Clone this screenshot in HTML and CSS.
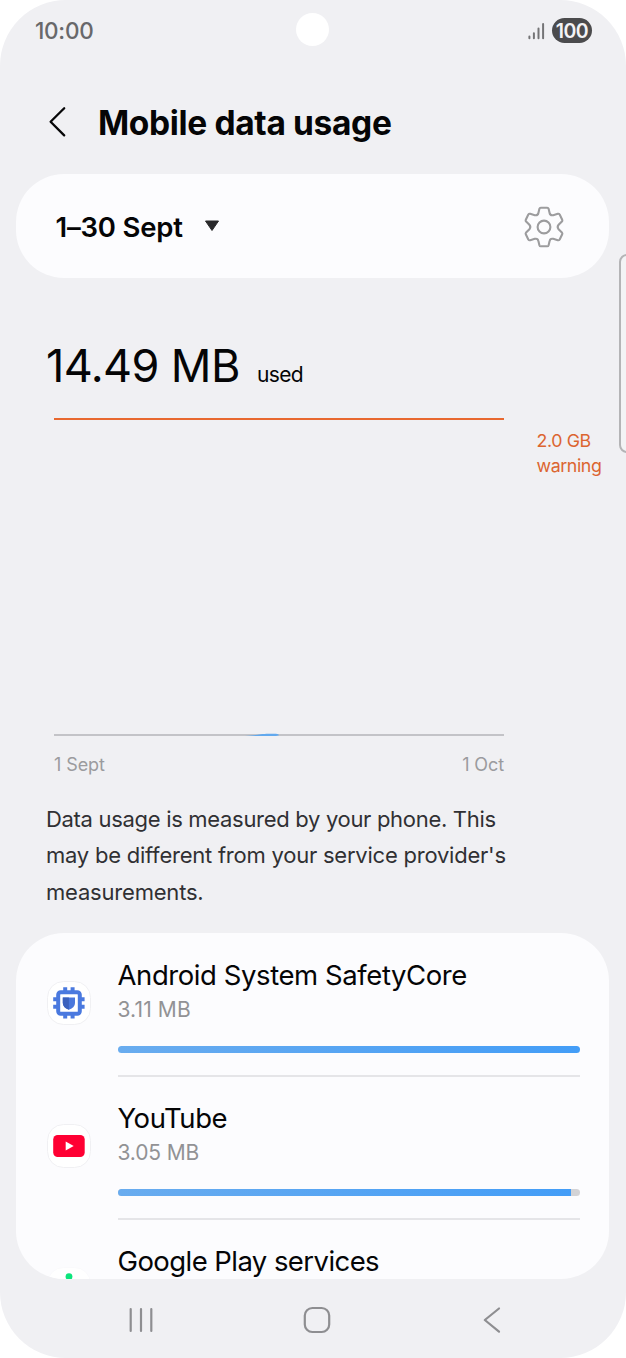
FILE: index.html
```html
<!DOCTYPE html>
<html lang="en-GB">
<head>
<meta charset="utf-8">
<title>Mobile data usage</title>
<link rel="stylesheet" href="styles.css">
</head>
<body>
<div class="screen">
  <header class="status">
    <span class="clock">10:00</span>
    <span class="camera"></span>
    <div class="status-right">
      <svg class="signal" width="18" height="18" viewBox="0 0 18 18"><path d="M2.4 14.6v1.6M6.9 11.2v5M11.5 6.6v9.6M16.1 2v14.2"/></svg>
      <span class="battery">100</span>
    </div>
  </header>
  <div class="titlebar">
    <svg class="back" width="20" height="34" viewBox="0 0 20 34"><path d="M17.2 2.2 3.6 15.8 17.2 29.4"/></svg>
    <h1 class="title">Mobile data usage</h1>
  </div>
  <section class="card period">
    <span class="period-label">1–30 Sept</span>
    <svg class="caret" width="16" height="12" viewBox="0 0 16 12"><path d="M1.5 1h13L8 10.5z"/></svg>
    <svg class="gear" width="42" height="42" viewBox="-21 -21 42 42"><path d="M-3.2-19.3H3.2Q4.3-19.3 4.6-18.2L5.6-14Q6.2-11.2 9.2-11.8L13.8-13.2Q15-13.5 15.7-12.5L18.2-7.3Q18.7-6.2 17.9-5.4L14.6-2.2Q12.7 0 14.6 2.2L17.9 5.4Q18.7 6.2 18.2 7.3L15.7 12.5Q15 13.5 13.8 13.2L9.2 11.8Q6.2 11.2 5.6 14L4.6 18.2Q4.3 19.3 3.2 19.3H-3.2Q-4.3 19.3-4.6 18.2L-5.6 14Q-6.2 11.2-9.2 11.8L-13.8 13.2Q-15 13.5-15.7 12.5L-18.2 7.3Q-18.7 6.2-17.9 5.4L-14.6 2.2Q-12.7 0-14.6-2.2L-17.9-5.4Q-18.7-6.2-18.2-7.3L-15.7-12.5Q-15-13.5-13.8-13.2L-9.2-11.8Q-6.2-11.2-5.6-14L-4.6-18.2Q-4.3-19.3-3.2-19.3Z"/><circle r="6.4"/></svg>
  </section>
  <div class="total"><span class="amount">14.49 MB</span><span class="used">used</span></div>
  <section class="chart">
    <div class="plot">
      <svg class="trend" width="36" height="4" viewBox="0 0 36 4"><path d="M0 3 C12 2.6 14 .8 24 .8H31Q34 1 34 2.2L31 3Z"/></svg>
    </div>
    <p class="warning">2.0 GB<br>warning</p>
  </section>
  <div class="axis"><span class="axis-start">1 Sept</span><span class="axis-end">1 Oct</span></div>
  <p class="note"><span class="l1">Data usage is measured by your phone. This</span><br><span class="l2">may be different from your service provider's</span><br><span class="l3">measurements.</span></p>
  <section class="card apps">
    <article class="app">
      <svg class="icon" width="46" height="46" viewBox="0 0 46 46"><rect class="tile" x="1.5" y="1.5" width="43" height="43" rx="16"/><path class="pins" d="M19.2 7.2V38.6M26.6 7.2V38.6M7.2 19.3H38.6M7.2 26.7H38.6"/><rect class="chip" x="12.2" y="12.2" width="21.6" height="21.6" rx="2.5"/><path class="shield" d="M16.8 17.5H29V23Q29 27.5 22.9 29.7Q16.8 27.5 16.8 23Z"/><path class="shield-half" d="M16.8 17.5H22.9V29.7Q16.8 27.5 16.8 23Z"/></svg>
      <div class="info">
        <h2 class="name n1">Android System SafetyCore</h2>
        <p class="size s1">3.11 MB</p>
        <div class="bar"><div class="fill" style="width:100%"></div></div>
      </div>
    </article>
    <article class="app">
      <svg class="icon" width="46" height="46" viewBox="0 0 46 46"><rect class="tile" x="1.5" y="1.5" width="43" height="43" rx="16"/><rect class="tube" x="7.2" y="12" width="31.5" height="22" rx="4.5"/><path class="play" d="M19.7 18.6v9L27.7 23.1z"/></svg>
      <div class="info">
        <h2 class="name n2">YouTube</h2>
        <p class="size s2">3.05 MB</p>
        <div class="bar"><div class="fill" style="width:98.1%"></div></div>
      </div>
    </article>
    <article class="app">
      <svg class="icon" width="46" height="46" viewBox="0 0 46 46"><rect class="tile tile-plain" x="1.5" y="1.5" width="43" height="43" rx="16"/><circle class="dot" cx="23" cy="10.6" r="3.4"/></svg>
      <div class="info">
        <h2 class="name n3">Google Play services</h2>
      </div>
    </article>
  </section>
  <nav class="nav">
    <svg width="30" height="30" viewBox="0 0 30 30"><path d="M4.7 4v22M15 4v22M25.3 4v22"/></svg>
    <svg width="30" height="30" viewBox="0 0 30 30"><rect x="2.8" y="3" width="24.4" height="24" rx="7.5"/></svg>
    <svg width="30" height="30" viewBox="0 0 30 30"><path d="M22 3.5 7.8 15 22 26.7"/></svg>
  </nav>
  <div class="edge-handle"></div>
</div>
</body>
</html>
```
FILE: styles.css
```css
* { box-sizing: border-box; margin: 0; padding: 0; }
body { background: #fff; font-family: Inter, "Liberation Sans", sans-serif; color: #050506; }
svg { display: block; flex: none; }
span, h1, h2, p { white-space: nowrap; }
.screen { position: relative; width: 626px; height: 1358px; overflow: hidden; background: #f0f0f3; border-radius: 66px; display: flex; flex-direction: column; }

.status { height: 61px; padding: 0 34px 0 35px; display: grid; grid-template-columns: 1fr 33px 1fr; align-items: center; }
.clock { font-size: 22.5px; font-weight: 500; letter-spacing: -.25px; color: #68686a; }
.camera { width: 33px; height: 33px; border-radius: 50%; background: #fff; position: relative; top: -1px; left: -.7px; }
.status-right { display: flex; justify-content: flex-end; align-items: center; gap: 7px; }
.signal path { stroke: #747476; stroke-width: 2; stroke-linecap: round; fill: none; }
.battery { width: 40px; height: 25px; border-radius: 13px; background: #4b4b4d; color: #f3f3f5; font-size: 19.5px; font-weight: 600; letter-spacing: -.5px; line-height: 26px; text-align: center; }

.titlebar { height: 113px; padding: 10px 0 0 47px; display: flex; align-items: center; }
.back path { fill: none; stroke: #070708; stroke-width: 2.3; stroke-linecap: round; stroke-linejoin: round; }
.title { margin-left: 31px; font-size: 33.5px; font-weight: 700; letter-spacing: -.35px; line-height: 44px; }

.card { margin: 0 17px 0 16px; background: #fcfcfe; border-radius: 48px; flex: none; }
.period { height: 104px; padding: 2px 44px 0 39.5px; display: flex; align-items: center; }
.period-label { font-size: 27.5px; font-weight: 600; letter-spacing: -.2px; }
.caret { margin: -2px 0 0 21px; }
.caret path { fill: #29292b; stroke: #29292b; stroke-width: 1; stroke-linejoin: round; }
.gear { margin-left: auto; }
.gear path, .gear circle { fill: none; stroke: #9c9c9e; stroke-width: 2.1; }

.total { height: 141px; padding: 58px 0 0 46px; display: flex; align-items: baseline; }
.amount { font-size: 45px; line-height: 60px; font-weight: 400; letter-spacing: -.6px; }
.used { margin-left: 17.3px; font-size: 21px; letter-spacing: -.65px; }

.chart { height: 318px; padding-left: 54px; display: flex; margin-top: -1px; }
.plot { width: 450px; border-top: 2px solid #e8682f; border-bottom: 2px solid #c3c3c7; position: relative; }
.trend { position: absolute; left: 191px; bottom: -3px; }
.trend path { fill: #62a9ee; }
.warning { margin: 10px 0 0 32.5px; font-size: 17.8px; line-height: 25px; letter-spacing: -.4px; color: #dc6530; }

.axis { width: 504px; padding: 16px 0 0 54px; height: 64.5px; display: flex; justify-content: space-between; font-size: 18px; letter-spacing: -.1px; line-height: 25px; color: #9b9b9e; }
.note { padding-left: 46px; height: 132.5px; font-size: 22px; line-height: 36.5px; color: #303033; }
.l1 { letter-spacing: -.31px; }
.l2 { letter-spacing: -.23px; }
.l3 { letter-spacing: -.2px; }

.apps { height: 346px; overflow: hidden; padding: 0 29px 0 31px; }
.app { height: 142.8px; display: flex; }
.icon { margin: 47px 25px 0 -1.5px; }
.info { width: 462.5px; height: 143.8px; padding-top: 23px; border-bottom: 2px solid #e5e5e8; margin-left: 1px; }
.name { font-size: 27.5px; font-weight: 400; line-height: 38px; }
.n1 { letter-spacing: -.42px; }
.n2 { letter-spacing: -.45px; }
.n3 { letter-spacing: -.57px; }
.size { margin-top: 1px; font-size: 21px; line-height: 30px; color: #929295; }
.s1 { letter-spacing: .12px; }
.s2 { letter-spacing: -.15px; }
.bar { margin-top: 21px; height: 7px; border-radius: 4px; background: #d3d3d6; overflow: hidden; }
.fill { height: 7px; background: linear-gradient(90deg, #69acef, #439df7); }
.tile { fill: #fff; stroke: #f0f0f3; stroke-width: 1; }
.tile-plain { stroke: #fafafc; }
.pins { stroke: #4a79df; stroke-width: 4; fill: none; }
.chip { fill: #fff; stroke: #4a79df; stroke-width: 4; }
.shield { fill: #4a77dc; }
.shield-half { fill: #3a60bd; }
.tube { fill: #ff0033; }
.play { fill: #fff; }
.dot { fill: #0ce57c; }

.nav { height: 79px; padding: 2px 119px 0 126px; display: flex; align-items: center; justify-content: space-between; }
.nav path, .nav rect { fill: none; stroke: #8e8e91; stroke-width: 2.2; stroke-linecap: round; stroke-linejoin: round; }
.edge-handle { position: absolute; left: 619px; top: 254px; width: 20px; height: 199px; border: 2px solid #b4b4b6; border-radius: 8px; background: #f3f3f5; }
```
